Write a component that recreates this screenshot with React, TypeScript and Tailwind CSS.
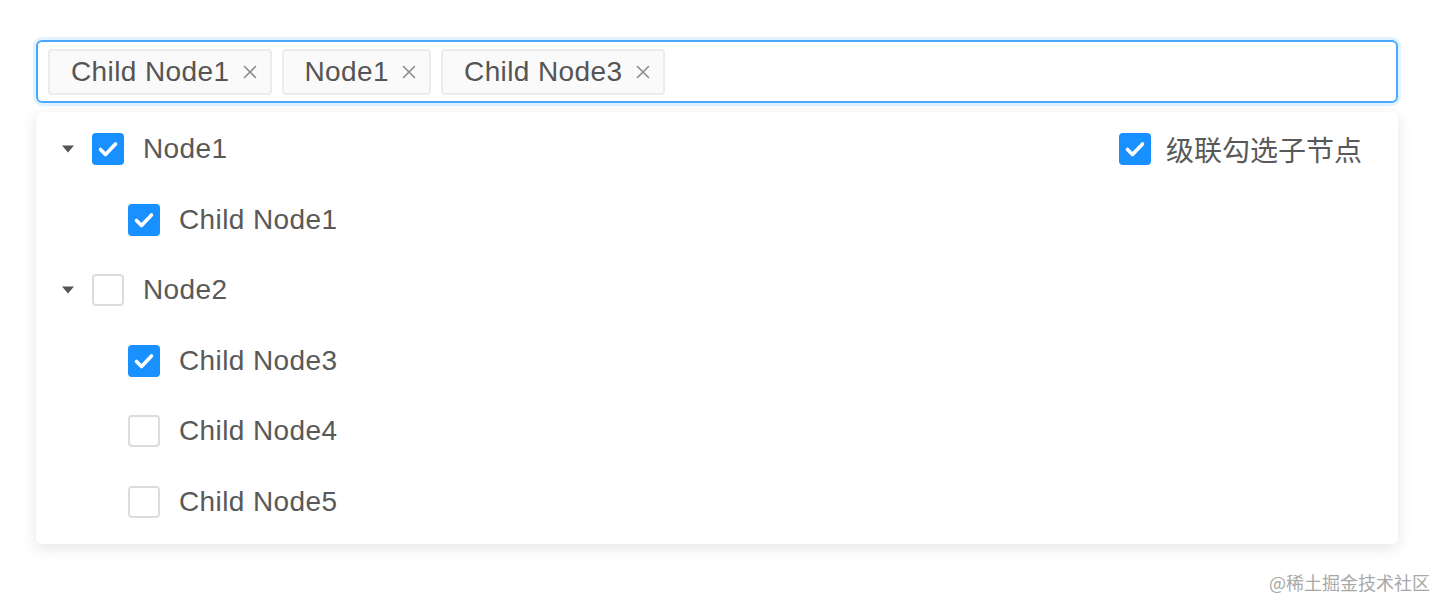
import React from "react";

const FONT = { fontFamily: '"Liberation Sans", "Noto Sans CJK SC", sans-serif' };

function CloseX() {
  return (
    <svg width="16" height="16" viewBox="0 0 16 16" className="shrink-0">
      <path d="M2.5 2.5 L13.5 13.5 M13.5 2.5 L2.5 13.5" stroke="#8c8c8c" strokeWidth="1.6" strokeLinecap="round" />
    </svg>
  );
}

function Tag({ label }: { label: string }) {
  return (
    <div className="flex h-[46px] items-center gap-[12px] rounded-[4px] border-2 border-[#ececec] bg-[#fafafa] pl-[21px] pr-[12px]">
      <span className="text-[28px] leading-none tracking-[0.4px] text-[#555555]">{label}</span>
      <CloseX />
    </div>
  );
}

function Checkbox({ checked }: { checked: boolean }) {
  if (checked) {
    return (
      <div className="flex h-[32px] w-[32px] shrink-0 items-center justify-center rounded-[4px] bg-[#1890ff]">
        <svg width="32" height="32" viewBox="0 0 32 32">
          <path d="M8.5 16.5 L13.5 21.5 L23.5 11" fill="none" stroke="#ffffff" strokeWidth="3.6" strokeLinecap="round" strokeLinejoin="round" />
        </svg>
      </div>
    );
  }
  return <div className="h-[32px] w-[32px] shrink-0 rounded-[4px] border-2 border-[#dcdcdc] bg-white" />;
}

function Caret() {
  return (
    <svg width="14" height="8" viewBox="0 0 14 8">
      <path d="M1 0.5 H13 L7 7.5 Z" fill="#555555" />
    </svg>
  );
}

type Node = { label: string; checked: boolean; level: number; parent?: boolean };

const nodes: Node[] = [
  { label: "Node1", checked: true, level: 0, parent: true },
  { label: "Child Node1", checked: true, level: 1 },
  { label: "Node2", checked: false, level: 0, parent: true },
  { label: "Child Node3", checked: true, level: 1 },
  { label: "Child Node4", checked: false, level: 1 },
  { label: "Child Node5", checked: false, level: 1 },
];

export default function App() {
  return (
    <div className="min-h-[600px] w-full bg-white pt-[40px]" style={FONT}>
      <div className="ml-[36px] mr-[38px]">
        {/* select box */}
        <div className="flex h-[63px] items-center gap-[10px] rounded-[6px] border-2 border-[#4aa8ff] px-[10px] shadow-[0_0_0_3px_rgba(24,144,255,0.12)]">
          <Tag label="Child Node1" />
          <Tag label="Node1" />
          <Tag label="Child Node3" />
        </div>

        {/* dropdown */}
        <div className="mt-[9px] flex rounded-[6px] bg-white pb-[7px] pt-[2px] shadow-[0_4px_16px_rgba(0,0,0,0.11)]">
          <div className="flex-1">
            {nodes.map((n) => (
              <div
                key={n.label}
                className={
                  n.level === 0
                    ? "flex h-[70.5px] items-center pl-[20px]"
                    : "flex h-[70.5px] items-center pl-[56px]"
                }
              >
                <div className="flex w-[24px] items-center justify-center">
                  {n.parent ? <Caret /> : null}
                </div>
                <div className="ml-[12px]">
                  <Checkbox checked={n.checked} />
                </div>
                <span className="ml-[19px] text-[28px] leading-none tracking-[0.4px] text-[#595959]">{n.label}</span>
              </div>
            ))}
          </div>
          <div className="flex h-[70.5px] items-center gap-[15px] pr-[36px]">
            <Checkbox checked={true} />
            <span className="text-[28px] leading-none text-[#595959]" style={{ fontFamily: '"Noto Sans CJK SC", sans-serif' }}>
              级联勾选子节点
            </span>
          </div>
        </div>
      </div>

      <div className="mt-[27px] flex justify-end pr-[6px]">
        <span className="text-[18px] leading-[22px] text-[#a8a8a8]" style={{ fontFamily: '"Noto Sans CJK SC", sans-serif' }}>
          @稀土掘金技术社区
        </span>
      </div>
    </div>
  );
}
